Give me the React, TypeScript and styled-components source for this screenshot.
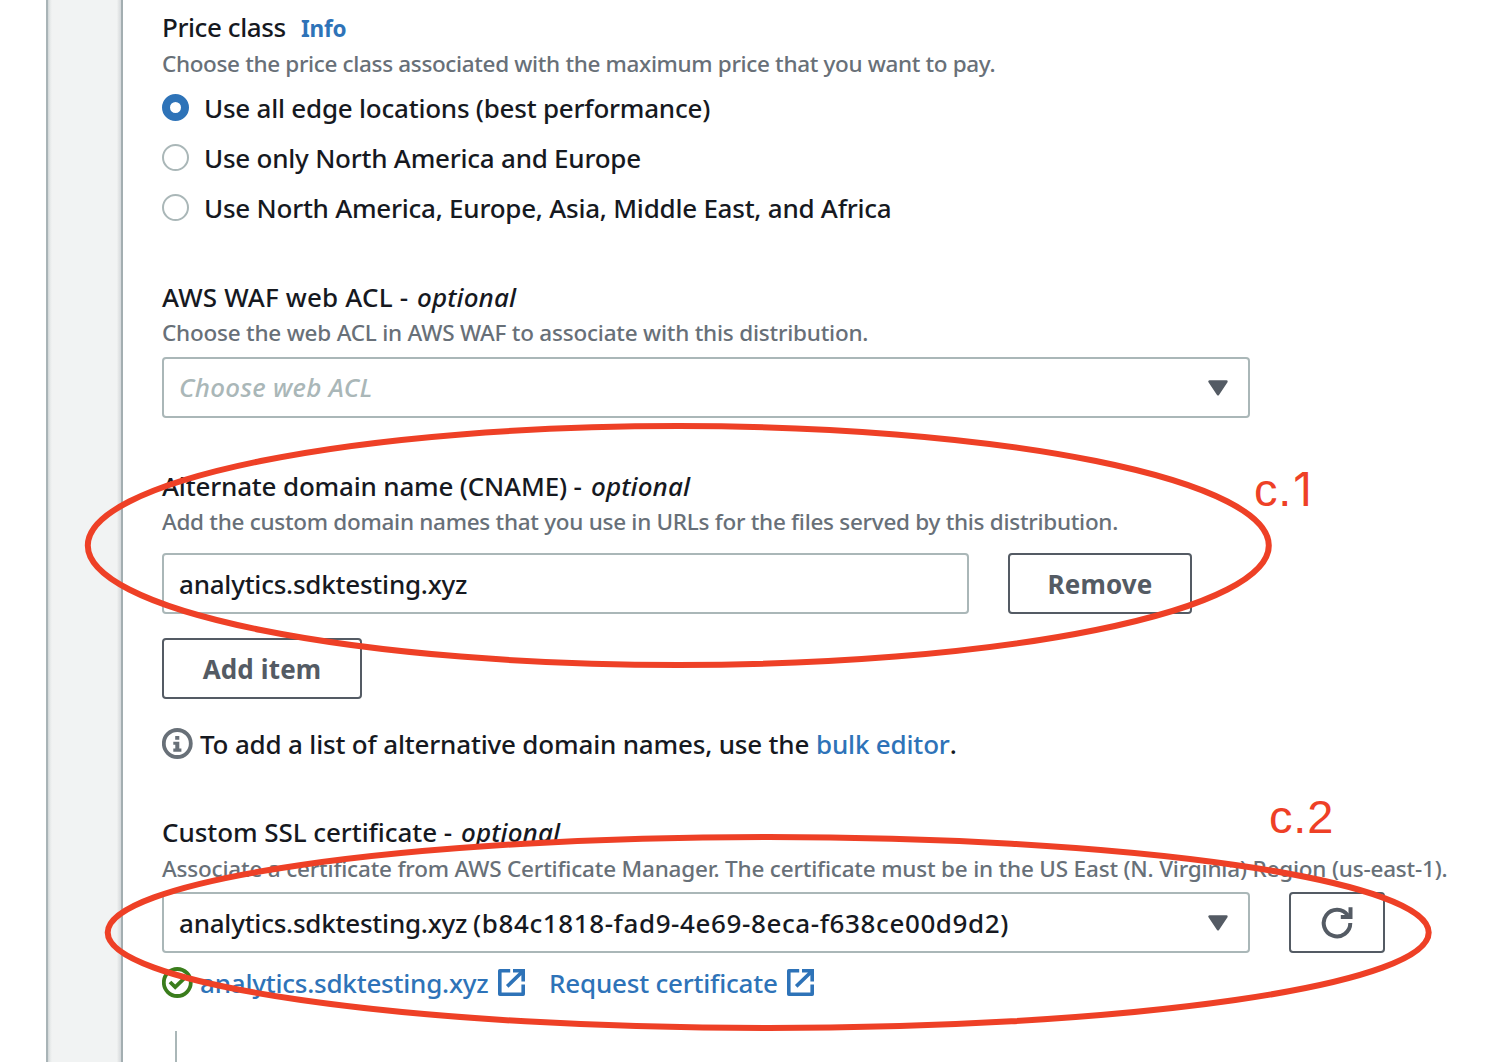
import React, { useState } from "react";
import styled, { createGlobalStyle } from "styled-components";

const color = {
  text: "#16191f",
  muted: "#687078",
  link: "#2e73b8",
  border: "#aab7b8",
  button: "#545b64",
  success: "#3a7d1c",
  marker: "#ee4026",
};

const GlobalStyle = createGlobalStyle`
  *, *::before, *::after { box-sizing: border-box; }
  body {
    margin: 0;
    background: #fff;
    color: ${color.text};
    font-family: "Noto Sans", "Open Sans", sans-serif;
    font-size: 26px;
    font-weight: 500;
    line-height: 36px;
  }
`;

const Page = styled.div`
  position: relative;
  display: flex;
  width: 1496px;
  height: 1062px;
  overflow: hidden;
`;

const Gutter = styled.div`
  flex: none;
  width: 77px;
  margin-left: 46px;
  border-left: 2px solid #a9b4b7;
  border-right: 2px solid #a3aeb1;
  background: linear-gradient(
    to right,
    #d0d6d7 0,
    #e6e9e9 2px,
    #f1f3f3 4px,
    #f1f3f3 69px,
    #e8eaea 70px,
    #d5d9dc 73px
  );
`;

const Form = styled.main`
  flex: none;
  display: flex;
  flex-direction: column;
  align-items: flex-start;
  padding: 9px 0 0 39px;
  width: 1373px;
`;

const Field = styled.section<{ $top?: number }>`
  display: flex;
  flex-direction: column;
  align-items: flex-start;
  margin-top: ${(p) => p.$top ?? 0}px;
  white-space: nowrap;
`;

const Line = styled.div`
  display: flex;
  align-items: center;
  height: 36px;
`;

const Text = styled.span<{ $ls?: number; $w?: number }>`
  letter-spacing: ${(p) => p.$ls ?? 0}px;
  width: ${(p) => (p.$w ? `${p.$w}px` : "auto")};
  white-space: nowrap;
`;

const Optional = styled.em`
  letter-spacing: 0.11px;
`;

const Info = styled.a`
  color: ${color.link};
  font-size: 22.5px;
  font-weight: 700;
  letter-spacing: -0.2px;
  padding-top: 4px;
`;

const Description = styled.p<{ $ls: number; $gap?: number }>`
  margin: ${(p) => p.$gap ?? 2}px 0 0;
  color: ${color.muted};
  font-size: 22.5px;
  line-height: 32px;
  letter-spacing: ${(p) => p.$ls}px;
`;

const RadioGroup = styled.div`
  display: grid;
  grid-auto-rows: 50px;
  margin-top: 2.5px;
`;

const RadioRow = styled.label`
  display: flex;
  align-items: center;
  gap: 15px;
`;

const Radio = styled.input`
  appearance: none;
  flex: none;
  width: 27px;
  height: 27px;
  margin: 0;
  border: 2px solid ${color.border};
  border-radius: 50%;
  background: #fff;

  &:checked {
    border: 8px solid ${color.link};
  }
`;

const ControlRow = styled.div<{ $top: number }>`
  display: flex;
  gap: 39px;
  margin-top: ${(p) => p.$top}px;
`;

const Box = styled.div<{ $w: number }>`
  display: flex;
  align-items: center;
  justify-content: space-between;
  width: ${(p) => p.$w}px;
  height: 61px;
  padding: 0 20px 0 15px;
  border: 2px solid ${color.border};
  border-radius: 4px;
  background: #fff;
`;

const Placeholder = styled.span`
  color: ${color.border};
  font-style: italic;
  letter-spacing: 0.28px;
  padding-bottom: 1px;
`;

const Button = styled.button<{ $w: number }>`
  display: flex;
  align-items: center;
  justify-content: center;
  width: ${(p) => p.$w}px;
  height: 61px;
  padding: 0;
  border: 2px solid ${color.button};
  border-radius: 4px;
  background: #fff;
  color: ${color.button};
  font: inherit;
  font-weight: 700;
  letter-spacing: 0.15px;
`;

const Link = styled.a<{ $ls: number; $left?: number }>`
  display: inline-flex;
  align-items: center;
  margin-left: ${(p) => p.$left ?? 0}px;
  color: ${color.link};
  letter-spacing: ${(p) => p.$ls}px;
`;

const StatusIcon = styled.svg`
  flex: none;
  width: 31px;
  height: 31px;
  margin: 0 7px 1px 0;
  fill: none;
`;

const ExternalSvg = styled.svg`
  flex: none;
  width: 27px;
  height: 27px;
  margin: 0 0 1px 9px;
  fill: none;
  stroke: ${color.link};
  stroke-width: 3.6;
`;

const Connector = styled.div`
  width: 2px;
  height: 40px;
  margin: 30px 0 0 13px;
  background: ${color.border};
`;

const Markup = styled.svg`
  position: absolute;
  inset: 0;
  pointer-events: none;
  fill: none;
  stroke: ${color.marker};
  stroke-width: 6;
`;

const Tag = styled.span<{ $x: number; $y: number }>`
  position: absolute;
  left: ${(p) => p.$x}px;
  top: ${(p) => p.$y}px;
  color: ${color.marker};
  font-family: "Liberation Sans", sans-serif;
  font-size: 47px;
  font-weight: 400;
  line-height: 54px;
  letter-spacing: 0.8px;
`;

const PlainDigit = styled.span`
  margin-left: 1px;
  font-family: Inter, sans-serif;
  font-size: 46px;
`;

const Caret = () => (
  <svg width="20" height="16" viewBox="0 0 20 16">
    <path
      d="M1.5 1.5h17L10 14.3z"
      fill={color.button}
      stroke={color.button}
      strokeWidth="2.4"
      strokeLinejoin="round"
    />
  </svg>
);

const ExternalIcon = () => (
  <ExternalSvg viewBox="0 0 27 27">
    <path d="M12.2 1.8H1.8v23.4h23.4V15.6" strokeLinejoin="round" />
    <path d="M15 1.8h10.2V12.4M9.2 17.4L24.8 2.2" />
  </ExternalSvg>
);

const InfoIcon = () => (
  <StatusIcon viewBox="0 0 31 31">
    <circle cx="15.3" cy="15.5" r="13.5" stroke={color.muted} strokeWidth="3.8" />
    <path
      d="M13.2 8h4.1v3.7h-4.1zM11.3 13.7h6v6.9h2.1v3.2h-8.1v-3.2h2v-3.8h-2z"
      fill={color.muted}
    />
  </StatusIcon>
);

const SuccessIcon = () => (
  <StatusIcon viewBox="0 0 31 31">
    <circle cx="15.3" cy="15.5" r="13.5" stroke={color.success} strokeWidth="3.8" />
    <path d="M8 15l5.2 5.2 8.8-8.6" stroke={color.success} strokeWidth="3.8" />
  </StatusIcon>
);

const RefreshIcon = () => (
  <svg width="32" height="32" viewBox="0 0 32 32" fill="none" stroke={color.button} strokeWidth="4">
    <path d="M29.3 16A13.3 13.3 0 1 1 26.9 8.4" />
    <path d="M19.8 9.9H29.5V0.3" />
  </svg>
);

const priceClasses = [
  { label: "Use all edge locations (best performance)", ls: -0.23 },
  { label: "Use only North America and Europe", ls: -0.23 },
  { label: "Use North America, Europe, Asia, Middle East, and Africa", ls: -0.24 },
];

export default function App() {
  const [selected, setSelected] = useState(0);
  return (
    <Page>
      <GlobalStyle />
      <Gutter />
      <Form>
        <Field>
          <Line>
            <Text $ls={-0.42} $w={139}>Price class</Text>
            <Info>Info</Info>
          </Line>
          <Description $ls={-0.343} $gap={3}>
            Choose the price class associated with the maximum price that you want to pay.
          </Description>
          <RadioGroup>
            {priceClasses.map((item, i) => (
              <RadioRow key={item.label}>
                <Radio
                  type="radio"
                  name="price-class"
                  checked={selected === i}
                  onChange={() => setSelected(i)}
                />
                <Text $ls={item.ls}>{item.label}</Text>
              </RadioRow>
            ))}
          </RadioGroup>
        </Field>

        <Field $top={46.5}>
          <Line>
            <Text $ls={0.17} $w={255}>AWS WAF web ACL -</Text>
            <Optional>optional</Optional>
          </Line>
          <Description $ls={-0.22}>
            Choose the web ACL in AWS WAF to associate with this distribution.
          </Description>
          <ControlRow $top={8}>
            <Box $w={1088}>
              <Placeholder>Choose web ACL</Placeholder>
              <Caret />
            </Box>
          </ControlRow>
        </Field>

        <Field $top={50}>
          <Line>
            <Text $ls={-0.18} $w={429}>Alternate domain name (CNAME) -</Text>
            <Optional>optional</Optional>
          </Line>
          <Description $ls={-0.283}>
            Add the custom domain names that you use in URLs for the files served by this distribution.
          </Description>
          <ControlRow $top={15}>
            <Box $w={807}>
              <Text $ls={-0.23}>analytics.sdktesting.xyz</Text>
            </Box>
            <Button $w={184}>Remove</Button>
          </ControlRow>
          <ControlRow $top={24}>
            <Button $w={200}>Add item</Button>
          </ControlRow>
        </Field>

        <Field $top={27}>
          <Line>
            <InfoIcon />
            <Text $ls={-0.18} $w={616}>To add a list of alternative domain names, use the</Text>
            <Link $ls={-0.18}>bulk editor</Link>
            <Text>.</Text>
          </Line>
        </Field>

        <Field $top={52}>
          <Line>
            <Text $ls={-0.06} $w={299}>Custom SSL certificate -</Text>
            <Optional>optional</Optional>
          </Line>
          <Description $ls={-0.19} $gap={3}>
            Associate a certificate from AWS Certificate Manager. The certificate must be in the US East (N. Virginia) Region (us-east-1).
          </Description>
          <ControlRow $top={7}>
            <Box $w={1088}>
              <Line>
                <Text $ls={-0.23} $w={294}>analytics.sdktesting.xyz </Text>
                <Text $ls={0.6}>(b84c1818-fad9-4e69-8eca-f638ce00d9d2)</Text>
              </Line>
              <Caret />
            </Box>
            <Button $w={96} aria-label="Refresh certificates">
              <RefreshIcon />
            </Button>
          </ControlRow>
        </Field>

        <Field $top={12}>
          <Line>
            <SuccessIcon />
            <Link $ls={-0.22}>
              analytics.sdktesting.xyz
              <ExternalIcon />
            </Link>
            <Link $ls={-0.2} $left={24.5}>
              Request certificate
              <ExternalIcon />
            </Link>
          </Line>
        </Field>
        <Connector />
      </Form>

      <Markup width="1496" height="1062">
        <ellipse cx="678.3" cy="545.5" rx="590.5" ry="119.5" />
        <ellipse cx="768.2" cy="932.5" rx="660.5" ry="95.5" />
      </Markup>
      <Tag $x={1254} $y={462}>
        c.<PlainDigit>1</PlainDigit>
      </Tag>
      <Tag $x={1269} $y={790}>c.2</Tag>
    </Page>
  );
}
